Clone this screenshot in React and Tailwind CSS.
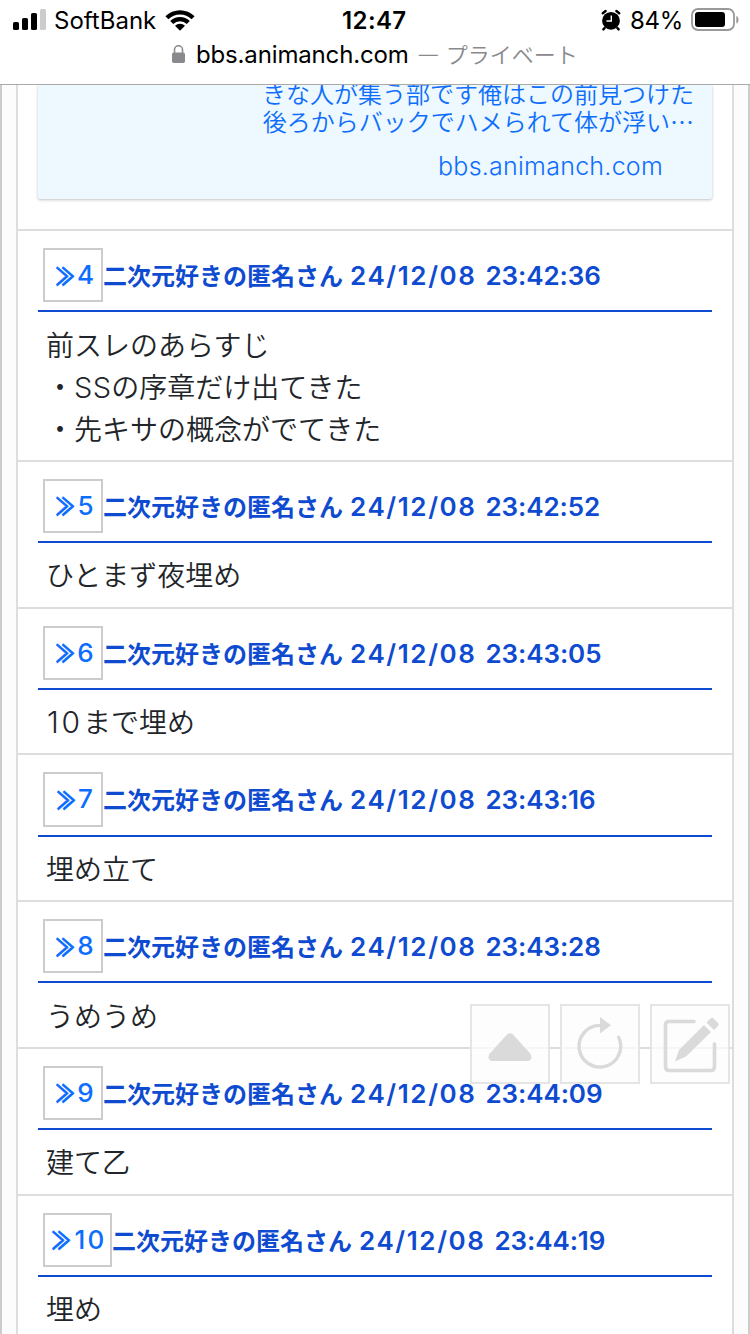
import React from 'react';

const posts = [
  { id: 4, date: '24/12/08', time: '23:42:36', lines: ['前スレのあらすじ', '・SSの序章だけ出てきた', '・先キサの概念がでてきた'] },
  { id: 5, date: '24/12/08', time: '23:42:52', lines: ['ひとまず夜埋め'] },
  { id: 6, date: '24/12/08', time: '23:43:05', lines: ['10まで埋め'] },
  { id: 7, date: '24/12/08', time: '23:43:16', lines: ['埋め立て'] },
  { id: 8, date: '24/12/08', time: '23:43:28', lines: ['うめうめ'] },
  { id: 9, date: '24/12/08', time: '23:44:09', lines: ['建て乙'] },
  { id: 10, date: '24/12/08', time: '23:44:19', lines: ['埋め'] },
];

// Latin letters and digits are set larger than the kana around them
const Line = ({ text }) => (
  <p className="h-[42px] whitespace-nowrap leading-[42px]">
    {text.split(/([A-Za-z]+|[0-9]+)/).map((part, i) => {
      if (/^[A-Za-z]+$/.test(part)) {
        return <span key={i} className="font-['Inter'] text-[29px] font-[350] leading-none tracking-[0.3px]">{part}</span>;
      }
      if (/^[0-9]+$/.test(part)) {
        return <span key={i} className="ml-px font-['Inter'] text-[30px] font-[350] leading-none tracking-[2.8px]">{part}</span>;
      }
      return part;
    })}
  </p>
);

const StatusBar = () => (
  <div className="relative flex h-10 items-center justify-between pl-[13px] pr-[11px] text-black">
    <div className="flex items-center">
      <svg width="33" height="22" viewBox="0 0 33 22">
        <rect x="0" y="13" width="6" height="8" rx="1.6" />
        <rect x="9" y="9" width="6" height="12" rx="1.6" />
        <rect x="18" y="4" width="6" height="17" rx="1.6" />
        <rect x="27" y="0" width="6" height="21" rx="1.6" fill="#ccc" />
      </svg>
      <span className="mt-px ml-[8px] text-[24px]">SoftBank</span>
      <svg className="ml-[9px]" width="30" height="22" viewBox="0 0 30 22">
        <path d="M0.4 7.2 A20.6 20.6 0 0 1 29.6 7.2 L26.6 10.2 A16.4 16.4 0 0 0 3.4 10.2 Z" />
        <path d="M5.2 12 A13.8 13.8 0 0 1 24.8 12 L21.8 15 A9.6 9.6 0 0 0 8.2 15 Z" />
        <path d="M10 16.8 A7 7 0 0 1 20 16.8 L15 21.8 Z" />
      </svg>
    </div>
    <span className="absolute left-[342px] top-[3px] text-[24px] font-semibold tracking-[0.4px]">12:47</span>
    <div className="flex items-center">
      <svg width="20" height="22" viewBox="0 0 20 22">
        <circle cx="10" cy="11.8" r="8.9" />
        <path d="M1.8 4.2 L4.6 2 M18.2 4.2 L15.4 2 M3.6 19 L2.4 20.4 M16.4 19 L17.6 20.4" stroke="#000" strokeWidth="2.4" strokeLinecap="round" />
        <path d="M10.3 6.5 V12 H5.5" fill="none" stroke="#fff" strokeWidth="1.4" />
      </svg>
      <span className="mt-px ml-[9px] text-[24px] tracking-[-0.3px]">84%</span>
      <svg className="ml-[8px]" width="48" height="24" viewBox="0 0 48 24">
        <rect x="1" y="1" width="42" height="21" rx="6" fill="none" stroke="#999" strokeWidth="1.8" />
        <rect x="4" y="4" width="30" height="15" rx="3" />
        <path d="M45.3 8 C48.3 9 48.3 14.5 45.3 15.5 Z" fill="#999" />
      </svg>
    </div>
  </div>
);

const Post = ({ post }) => (
  <article className="border-t-2 border-[#ddd] px-5 pt-[17px] pb-[11.25px]">
    <header className="flex h-[64.25px] items-start border-b-2 border-[#0f4bd0] pl-[5px] whitespace-nowrap text-[#0f4bd0]">
      <span className={`flex h-[54.25px] shrink-0 items-center justify-center border-2 border-[#ccc] text-[#0d6efd] ${post.id > 9 ? 'w-[69px]' : 'w-[60px]'}`}>
        <span className="-mt-px translate-x-px scale-x-[0.8] text-[24px] leading-none [-webkit-text-stroke:1.2px_currentColor]">≫</span>
        <span className={`font-['Inter'] text-[26px] font-medium leading-none ${post.id > 9 ? 'ml-[2px] tracking-[2.3px]' : 'ml-px'}`}>{post.id}</span>
      </span>
      <span className="text-[24px] font-bold leading-[53px]">二次元好きの匿名さん</span>
      <time className="ml-[7px] flex font-['Inter'] text-[26px] font-semibold leading-[55px] [font-feature-settings:'calt'_0]">
        <span className="w-[135.5px] tracking-[1.6px]">{post.date}</span>
        <span className="tracking-[-0.1px]">{post.time}</span>
      </time>
    </header>
    <div className="pl-2 pt-[10.25px] text-[28px] font-[350] text-[#212529]">
      {post.lines.map((line) => (
        <Line key={line} text={line} />
      ))}
    </div>
  </article>
);

const FloatButton = ({ children }) => (
  <button className="flex size-20 items-center justify-center border-2 border-[#e5e5e5] bg-[#fdfdfd]/80">{children}</button>
);

const App = () => (
  <div className="relative flex h-[1334px] w-[750px] flex-col overflow-hidden bg-white font-['Noto_Sans_CJK_JP',sans-serif]">
    <div className="h-[85px] shrink-0 border-b border-[#a9a9a9] bg-white font-['Inter','Noto_Sans_CJK_JP',sans-serif]">
      <StatusBar />
      <div className="flex h-[30px] items-center pl-[172px] text-[24px] text-black">
        <svg className="-mt-[2px]" width="13" height="18" viewBox="0 0 13 18">
          <rect y="7.5" width="13" height="10.5" rx="1.8" fill="#8a8a8e" />
          <path d="M2.5 8 V4.8 A4 4 0 0 1 10.5 4.8 V8" fill="none" stroke="#8a8a8e" strokeWidth="1.6" />
        </svg>
        <span className="ml-[11px] tracking-[-0.15px]">bbs.animanch.com</span>
        <span className="ml-[10px] flex items-center text-[22px] font-[350] text-[#8a8a8e]">
          <span className="w-[27px] text-[19px]">—</span>
          プライベート
        </span>
      </div>
    </div>

    <main className="min-h-0 flex-1 border-x-2 border-[#ccc] bg-[#fcfcfc] px-[14px]">
      <div className="h-full overflow-hidden border-x-2 border-[#ddd] bg-white">
        <div className="h-[144px] px-5">
          <a className="flex h-[114px] flex-col items-end rounded-b-[2px] bg-[#edf8ff] text-[24px] font-[350] text-[#0d6efd] shadow-[0_1px_3px_rgba(0,0,0,0.25)]">
            <span className="-mt-[6px] mr-[18px] text-right leading-[28px]">
              きな人が集う部です俺はこの前見つけた
              <br />
              後ろからバックでハメられて体が浮い…
            </span>
            <span className="mr-[49px] mt-[17px] font-['Inter'] text-[25px] font-[350] leading-[28px] tracking-[0.25px]">bbs.animanch.com</span>
          </a>
        </div>
        {posts.map((post) => (
          <Post key={post.id} post={post} />
        ))}
      </div>
    </main>

    <div className="absolute left-[470px] top-[1004px] flex gap-[10px]">
      <FloatButton>
        <svg className="mt-[6px]" width="44" height="28" viewBox="0 0 44 28" fill="#dadada">
          <path d="M19 1.6 Q22 -1.2 25 1.6 L42.6 21 Q45.2 27 40 28 H4 Q-1.2 27 1.4 21 Z" />
        </svg>
      </FloatButton>
      <FloatButton>
        <svg width="76" height="76" viewBox="0 0 76 76" fill="none">
          <path d="M56.6 31.2 A20.8 20.8 0 1 1 38 19.4" stroke="#dadada" strokeWidth="3.4" strokeLinecap="round" />
          <path d="M38 11 L49 19.3 L38 27.6 Z" fill="#dadada" />
        </svg>
      </FloatButton>
      <FloatButton>
        <svg width="76" height="76" viewBox="0 0 76 76" fill="#dadada">
          <path d="M42 15.5 H17 Q13.5 15.5 13.5 19 V60 Q13.5 64.5 17 64.5 H59 Q62.5 64.5 62.5 60 V38" fill="none" stroke="#dadada" strokeWidth="3.6" strokeLinecap="round" />
          <path d="M52 19 L59 26 L34 50.5 L23 55.5 L27 44 Z M54.5 16.5 L58.5 12.5 Q60 11 61.5 12.5 L66 17 Q67.5 18.5 66 20 L62 24 Z" />
        </svg>
      </FloatButton>
    </div>
  </div>
);

export default App;
